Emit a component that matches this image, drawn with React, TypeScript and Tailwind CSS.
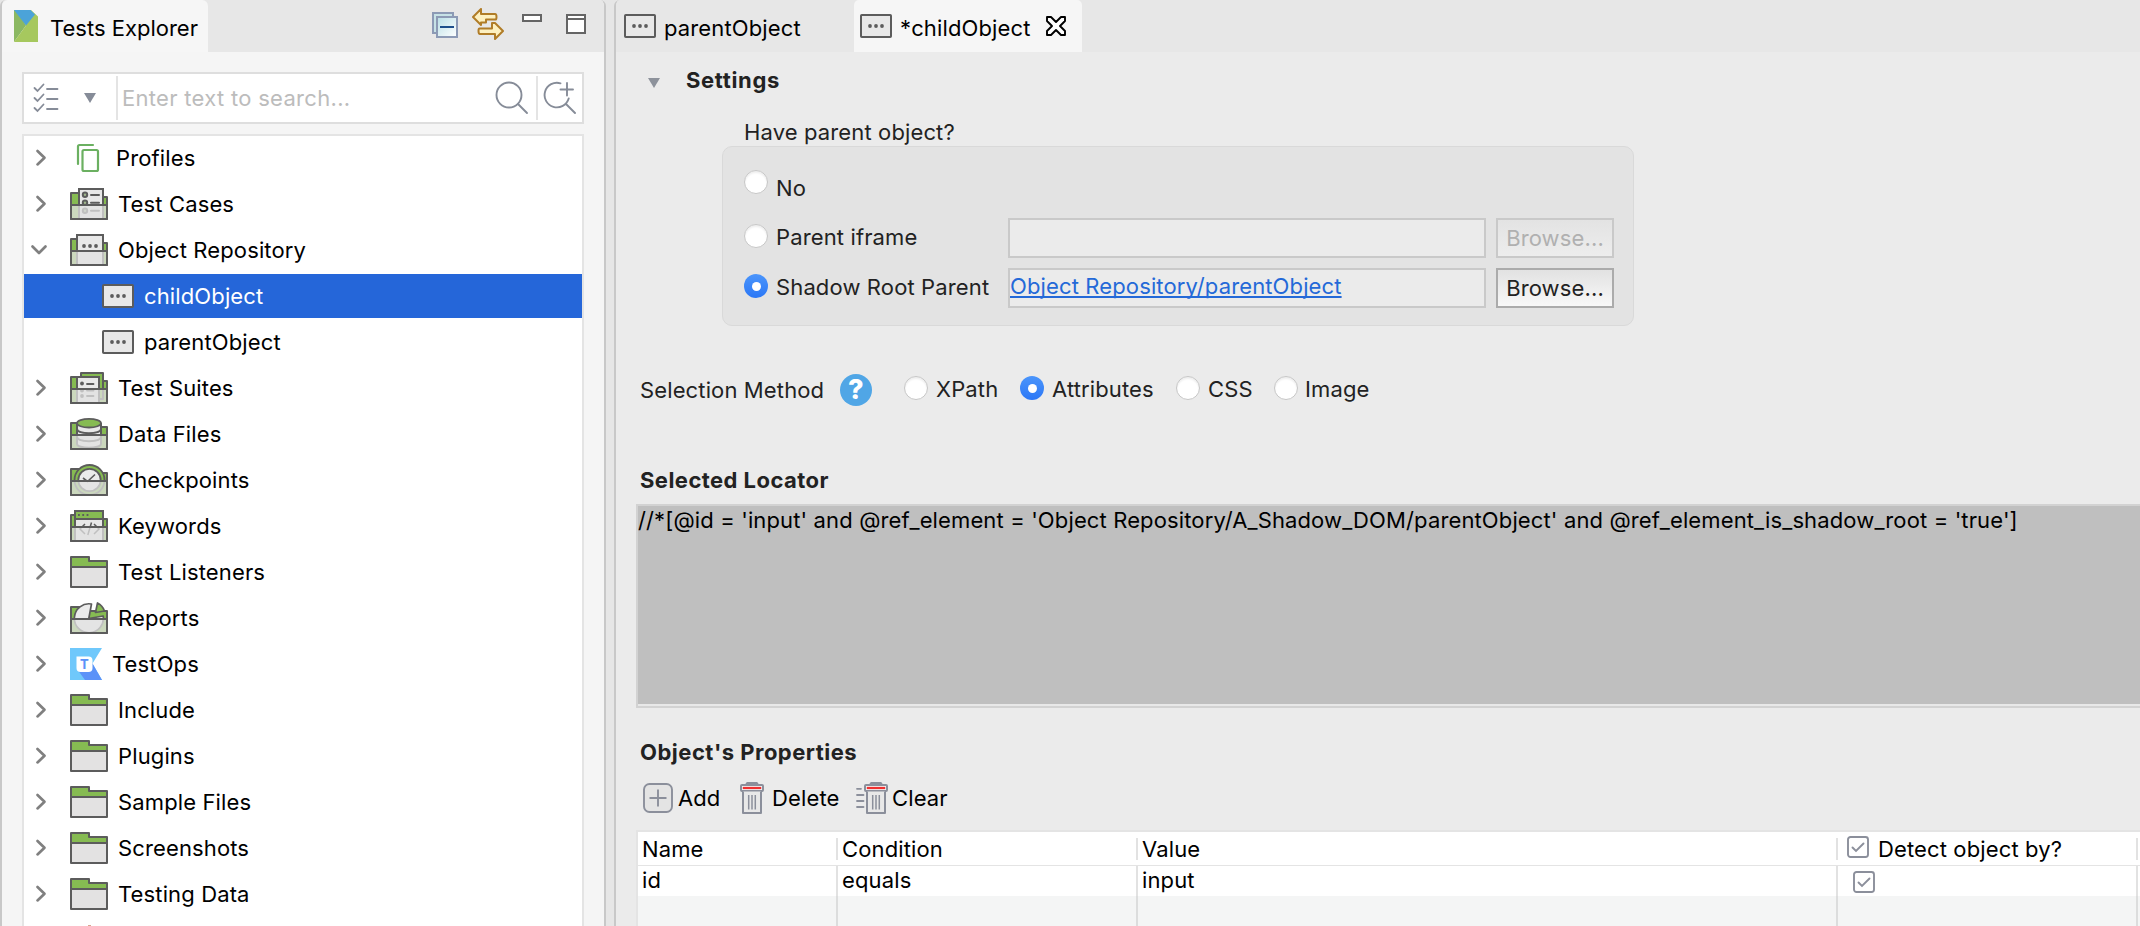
import React from "react";

const STROKE = "#5c5c5c";
const GREEN = "#86bb52";

type IconName =
  | "profiles"
  | "cases"
  | "repo"
  | "suites"
  | "data"
  | "check"
  | "keywords"
  | "folder"
  | "reports"
  | "testops";

function ObjectIcon({ fill = "#e8e8e8" }: { fill?: string }) {
  return (
    <svg width="32" height="24" viewBox="0 0 32 24" className="shrink-0">
      <rect x="1" y="1" width="30" height="22" rx="0.8" fill={fill} stroke={STROKE} strokeWidth="2" />
      <circle cx="10" cy="12" r="1.9" fill={STROKE} />
      <circle cx="16" cy="12" r="1.9" fill={STROKE} />
      <circle cx="22" cy="12" r="1.9" fill={STROKE} />
    </svg>
  );
}

function OpenFolder({ children }: { children: React.ReactNode }) {
  return (
    <svg width="38" height="32" viewBox="0 0 38 32" className="shrink-0">
      <path d="M1 31V5H17V9H37V31Z" fill={GREEN} stroke={STROKE} strokeWidth="2" strokeLinejoin="round" />
      {children}
      <rect x="1" y="17" width="36" height="14" fill="#e2e2e2" fillOpacity="0.75" />
      <path d="M1 17H37V31H1Z" fill="none" stroke={STROKE} strokeWidth="2" strokeLinejoin="round" />
    </svg>
  );
}

function TreeIcon({ name }: { name: IconName }) {
  switch (name) {
    case "profiles":
      return (
        <svg width="38" height="32" viewBox="0 0 38 32" className="shrink-0">
          <g fill="none" stroke="#6bb061" strokeWidth="2.2" strokeLinecap="round" strokeLinejoin="round">
            <path d="M8 22V4.5Q8 3 9.500 3H23" />
            <rect x="12.500" y="8" width="15.500" height="21" rx="1.5" />
          </g>
        </svg>
      );
    case "cases":
      return (
        <OpenFolder>
          <rect x="9" y="1" width="24" height="32" fill="#e8e8e8" stroke={STROKE} strokeWidth="2" />
          <g stroke={STROKE} strokeWidth="2" fill="#9fb58c">
            <circle cx="15" cy="6.800" r="2.200" />
            <circle cx="15" cy="14.800" r="2.200" />
            <circle cx="15" cy="22.800" r="2.200" />
            <path d="M21 7H29M21 14.800H29M21 22.800H29" strokeLinecap="round" />
          </g>
        </OpenFolder>
      );
    case "repo":
      return (
        <OpenFolder>
          <rect x="7" y="1" width="26" height="32" fill="#e8e8e8" stroke={STROKE} strokeWidth="2" />
          <g fill={STROKE}>
            <circle cx="14" cy="12" r="1.900" />
            <circle cx="20" cy="12" r="1.900" />
            <circle cx="26" cy="12" r="1.900" />
          </g>
        </OpenFolder>
      );
    case "suites":
      return (
        <OpenFolder>
          <path d="M11 5V1H33V27H29" fill={GREEN} stroke={STROKE} strokeWidth="2" strokeLinejoin="round" />
          <rect x="7" y="5" width="22" height="28" fill="#e8e8e8" stroke={STROKE} strokeWidth="2" />
          <g fill={STROKE} stroke="none">
            <circle cx="12" cy="11.500" r="1.900" />
            <circle cx="12" cy="18.500" r="1.900" />
            <circle cx="12" cy="24" r="1.900" />
          </g>
          <path d="M17 12H23.500M17 18.500H23.500M17 24H23.500" stroke={STROKE} strokeWidth="1.800" strokeLinecap="round" />
        </OpenFolder>
      );
    case "data":
      return (
        <OpenFolder>
          <path d="M7 5V26C7 31 31 31 31 26V5" fill="#e8e8e8" stroke={STROKE} strokeWidth="2" />
          <path d="M7 11C7 16.500 31 16.500 31 11M7 19C7 24.500 31 24.500 31 19" fill="none" stroke={STROKE} strokeWidth="2" />
          <ellipse cx="19" cy="5.200" rx="12" ry="4.300" fill={GREEN} stroke={STROKE} strokeWidth="1.800" />
        </OpenFolder>
      );
    case "check":
      return (
        <OpenFolder>
          <circle cx="19.500" cy="16" r="15" fill={GREEN} stroke={STROKE} strokeWidth="1.800" />
          <circle cx="19.500" cy="16" r="11.200" fill="#ebebeb" stroke={STROKE} strokeWidth="1.800" />
          <path d="M13 14L17.500 17.500L25 10.500" fill="none" stroke={STROKE} strokeWidth="1.600" />
        </OpenFolder>
      );
    case "keywords":
      return (
        <OpenFolder>
          <rect x="5" y="1" width="28" height="32" fill="#e8e8e8" stroke={STROKE} strokeWidth="2" />
          <path d="M5 1H33V9H5Z" fill={GREEN} stroke={STROKE} strokeWidth="2" strokeLinejoin="round" />
          <path d="M8 5H9.800M12.300 5H14.100M16.600 5H18.400" stroke={STROKE} strokeWidth="1.800" />
          <path d="M15 14L10 19L15 24M24 14L29 19L24 24M21.500 12.500L17.800 25" fill="none" stroke={STROKE} strokeWidth="1.500" />
        </OpenFolder>
      );
    case "reports":
      return (
        <OpenFolder>
          <path d="M21.500 2A14.500 14.500 0 1 0 33.200 14L18.800 16.500Z" fill="#ebebeb" stroke={STROKE} strokeWidth="1.700" strokeLinejoin="round" />
          <path d="M27.500 1L25.500 10.500L34.500 9Q32.500 3.500 27.500 1Z" fill={GREEN} stroke={STROKE} strokeWidth="1.700" strokeLinejoin="round" />
        </OpenFolder>
      );
    case "testops":
      return (
        <svg width="32" height="32" viewBox="0 0 32 32" className="shrink-0">
          <path d="M0 0H32L22.500 15.500L32 32H0Z" fill="#6fc8fb" />
          <path d="M8.500 23L15 32H32L22.500 15.500Z" fill="#5b92f8" />
          <path d="M6.500 8.500H18.500Q22.500 8.500 22.500 12.500V20Q22.500 24 18.500 24H10.500Q6.500 24 6.500 20Z" fill="#ffffff" />
          <text x="14.500" y="20.800" textAnchor="middle" fontFamily="Liberation Mono, monospace" fontWeight="700" fontSize="14.500" fill="#5b92f8">
            T
          </text>
        </svg>
      );
    default:
      return (
        <svg width="38" height="32" viewBox="0 0 38 32" className="shrink-0">
          <path d="M1 31V1H19V5H37V31Z" fill={GREEN} />
          <rect x="1" y="11" width="36" height="20" fill="#e3e2e2" />
          <path d="M1 31V1H19V5H37V31ZM1 11H37" fill="none" stroke={STROKE} strokeWidth="2" strokeLinejoin="round" />
        </svg>
      );
  }
}

type Row = { label: string; icon?: IconName; open?: boolean; child?: boolean; selected?: boolean; gap?: string };

const rows: Row[] = [
  { label: "Profiles", icon: "profiles", gap: "ml-2" },
  { label: "Test Cases", icon: "cases" },
  { label: "Object Repository", icon: "repo", open: true },
  { label: "childObject", child: true, selected: true },
  { label: "parentObject", child: true },
  { label: "Test Suites", icon: "suites" },
  { label: "Data Files", icon: "data" },
  { label: "Checkpoints", icon: "check" },
  { label: "Keywords", icon: "keywords" },
  { label: "Test Listeners", icon: "folder" },
  { label: "Reports", icon: "reports" },
  { label: "TestOps", icon: "testops", gap: "ml-[10px]" },
  { label: "Include", icon: "folder" },
  { label: "Plugins", icon: "folder" },
  { label: "Sample Files", icon: "folder" },
  { label: "Screenshots", icon: "folder" },
  { label: "Testing Data", icon: "folder" },
];

function Chevron({ open }: { open?: boolean }) {
  return (
    <svg width="20" height="20" viewBox="0 0 20 20" className={open ? "ml-[5px] mr-[21px] shrink-0" : "ml-[7px] mr-[19px] shrink-0"}>
      <path
        d={open ? "M3.500 6.500L10 13L16.500 6.500" : "M6.500 3L13.500 9.700L6.500 16.400"}
        fill="none"
        stroke="#808080"
        strokeWidth="2.700"
        strokeLinecap="round"
        strokeLinejoin="round"
      />
    </svg>
  );
}

function TreeRow({ row }: { row: Row }) {
  return (
    <div className={`mb-0.5 flex h-11 shrink-0 items-center ${row.selected ? "bg-[#2566d9] text-white" : ""}`}>
      {row.child ? (
        <span className="ml-[78px] flex">
          <ObjectIcon />
        </span>
      ) : (
        <>
          <Chevron open={row.open} />
          <TreeIcon name={row.icon as IconName} />
        </>
      )}
      <span className={row.gap ?? "ml-[10px]"}>{row.label}</span>
    </div>
  );
}

function Radio({ on, className = "" }: { on?: boolean; className?: string }) {
  return on ? (
    <span className={`flex size-6 shrink-0 items-center justify-center rounded-full bg-linear-to-b from-[#4b95fb] to-[#2b77f6] ${className}`}>
      <span className="size-[9px] rounded-full bg-white" />
    </span>
  ) : (
    <span className={`size-6 shrink-0 rounded-full border border-[#c6c6c6] bg-white shadow-[inset_0_2px_2px_rgba(0,0,0,0.07)] ${className}`} />
  );
}

function Triangle({ className = "", fill = "#868c98" }: { className?: string; fill?: string }) {
  return (
    <svg width="12" height="10" viewBox="0 0 12 10" className={`shrink-0 ${className}`}>
      <path d="M0 0H12L6 10Z" fill={fill} />
    </svg>
  );
}

function Checkbox({ className = "" }: { className?: string }) {
  return (
    <svg width="22" height="22" viewBox="0 0 22 22" className={`shrink-0 ${className}`}>
      <rect x="1" y="1" width="20" height="20" rx="2.500" fill="#fff" stroke="#8b8f9b" strokeWidth="1.900" />
      <path d="M5.500 11.500L9 15L16.500 7.500" fill="none" stroke="#8b8f9b" strokeWidth="1.900" strokeLinecap="round" />
    </svg>
  );
}

function TrashIcon({ lines }: { lines?: boolean }) {
  return (
    <svg width={lines ? 32 : 24} height="32" viewBox={lines ? "-8 0 32 32" : "0 0 24 32"} className="shrink-0">
      {lines && <path d="M-7 6.800H-3M-7 13H-0.500M-7 19H-0.500M-7 25H-0.500" stroke="#8b8f9b" strokeWidth="1.800" strokeLinecap="round" />}
      <path d="M6 2.500L7 0.800H17L18 2.500Z" fill="#8b8f9b" stroke="#8b8f9b" strokeWidth="1.500" strokeLinejoin="round" />
      <rect x="1" y="3" width="22" height="6" rx="1" fill="#f1f1f1" stroke="#8b8f9b" strokeWidth="2" />
      <path d="M2.800 6H21.200" stroke="#f03030" strokeWidth="2.200" />
      <path d="M3 9.500V31H21V9.500" fill="#e8e8e8" stroke="#8b8f9b" strokeWidth="2" strokeLinejoin="round" />
      <path d="M8.700 13V27.500M12 13V27.500M15.300 13V27.500" stroke="#8b8f9b" strokeWidth="1.500" />
    </svg>
  );
}

function Explorer() {
  return (
    <aside className="flex h-full w-[606px] shrink-0 flex-col overflow-hidden rounded-t-[6px] border-x-2 border-[#c8c8c8] bg-[#f5f5f5]">
      <div className="flex h-[52px] shrink-0 items-start bg-[#e7e7e7]">
        <div className="flex h-full w-[206px] shrink-0 items-start rounded-t-[6px] bg-[#f6f6f6] pl-3">
          <svg width="24" height="32" viewBox="0 0 24 32" className="mt-[10px] shrink-0">
            <path d="M0 0H4L12 15.500L0 32Z" fill="#8bb862" />
            <path d="M2 0H17L24 6.500V32H0L12 15.500Z" fill="#a6c85e" />
            <path d="M0 0H16.500L21 4.500L12 15.500Z" fill="#4ba3d9" />
          </svg>
          <span className="ml-3 mt-[14px] tracking-normal">Tests Explorer</span>
        </div>
        <svg width="26" height="26" viewBox="0 0 26 26" className="ml-[224px] mt-3 shrink-0">
          <defs>
            <linearGradient id="sheet" x1="0" y1="0" x2="1" y2="1">
              <stop offset="0" stopColor="#b9dfe6" />
              <stop offset="1" stopColor="#ffffff" />
            </linearGradient>
          </defs>
          <rect x="1" y="1" width="20" height="20" fill="#c7e2e6" stroke="#8c9ab5" strokeWidth="2" />
          <rect x="5" y="5" width="20" height="20" fill="url(#sheet)" stroke="#8c9ab5" strokeWidth="2" />
          <path d="M8 15H22" stroke="#1d4f8b" strokeWidth="2" />
        </svg>
        <svg width="32" height="32" viewBox="0 0 32 32" className="ml-[14px] mt-2 shrink-0">
          <g fill="#fdf0c0" stroke="#b07c27" strokeWidth="2" strokeLinejoin="round">
            <path d="M1 9L9 1V6H23Q24.500 6 24.500 9T23 11.500H14V14.500H9V17Z" />
            <path d="M31 23L23 31V26H8Q6.500 26 6.500 23T8 20.500H20V15H23Z" />
          </g>
        </svg>
        <svg width="20" height="8" viewBox="0 0 20 8" className="ml-[18px] mt-[14px] shrink-0">
          <rect x="1" y="1" width="18" height="6" fill="#fff" stroke="#656565" strokeWidth="2" />
        </svg>
        <svg width="20" height="20" viewBox="0 0 20 20" className="ml-6 mt-[14px] shrink-0">
          <path d="M1 1H19V19H1ZM1 5H19" fill="#fff" stroke="#656565" strokeWidth="2" />
        </svg>
      </div>

      <div className="mx-5 mt-5 flex h-[52px] shrink-0 items-center border-2 border-[#dedede] bg-white">
        <svg width="26" height="30" viewBox="0 0 26 30" className="ml-[9px]">
          <g fill="none" stroke="#868c98" strokeWidth="1.800" strokeLinecap="round">
            <path d="M1.500 5L4.500 8L10.500 1.500M1.500 15L4.500 18L10.500 11.500M1.500 25L4.500 28L10.500 21.500" />
            <path d="M14 6H24.500M14 16H24.500M14 26H24.500" />
          </g>
        </svg>
        <Triangle className="ml-[25px]" />
        <span className="ml-5 h-11 w-0.5 bg-[#e4e4e4]" />
        <span className="ml-1 w-[373px] tracking-[0.3px] text-[#bcbcbc]">Enter text to search...</span>
        <svg width="34" height="34" viewBox="0 0 34 34" className="shrink-0">
          <g fill="none" stroke="#868c98" strokeWidth="1.900" strokeLinecap="round">
            <circle cx="14" cy="14" r="12.500" />
            <path d="M23 23L32 32" />
          </g>
        </svg>
        <span className="ml-[7px] h-11 w-0.5 shrink-0 bg-[#e4e4e4]" />
        <svg width="34" height="34" viewBox="0 0 34 34" className="ml-[5px] shrink-0">
          <g fill="none" stroke="#868c98" strokeWidth="1.900" strokeLinecap="round">
            <path d="M17.500 2.300A12.300 12.300 0 1 0 25.700 17.500M23 23L32 32M17.500 8.500H30M24 2V14.500" />
          </g>
        </svg>
      </div>

      <div className="mx-5 mt-[10px] flex min-h-0 flex-1 flex-col overflow-hidden border-2 border-b-0 border-[#e4e4e4] bg-white">
        {rows.map((r) => (
          <TreeRow key={r.label} row={r} />
        ))}
        <div className="flex h-11 shrink-0 items-start pl-[64px] pt-[7px]">
          <span className="h-2 w-[3px] bg-[#d9a58f]" />
        </div>
      </div>
    </aside>
  );
}

function BrowseButton({ disabled }: { disabled?: boolean }) {
  return (
    <button
      className={
        disabled
          ? "ml-[10px] flex h-10 w-[118px] items-start justify-center border-2 border-[#c9c9c9] bg-linear-to-b from-[#e3e3e3] to-[#ededed] pt-1 text-[#b0b0b0]"
          : "ml-[10px] flex h-10 w-[118px] items-start justify-center border-2 border-[#ababab] bg-linear-to-b from-[#e2e2e2] to-[#f8f8f8] pt-1 text-[#222]"
      }
    >
      Browse...
    </button>
  );
}

function Editor() {
  return (
    <main className="ml-2 flex h-full min-w-0 flex-1 flex-col overflow-hidden rounded-tl-[6px] border-l-2 border-[#c8c8c8] bg-[#ebebeb] text-[#222]">
      <div className="flex h-[52px] shrink-0 bg-[#e7e7e7] text-black">
        <div className="flex w-[238px] items-start pl-2 pt-[14px]">
          <ObjectIcon />
          <span className="ml-2">parentObject</span>
        </div>
        <div className="flex w-[228px] items-start rounded-t-[5px] bg-[#f6f6f6] pl-1.5 pt-[14px]">
          <ObjectIcon />
          <span className="ml-2 w-[146px]">*childObject</span>
          <svg width="20" height="20" viewBox="0 0 20 20" className="mt-0.5">
            <path
              d="M1 1H5L10 6L15 1H19V5L14 10L19 15V19H15L10 14L5 19H1V15L6 10L1 5Z"
              fill="#fff"
              stroke="#000"
              strokeWidth="1.900"
              strokeLinejoin="round"
            />
          </svg>
        </div>
      </div>

      <div className="mt-[14px] flex h-7 shrink-0 pl-8">
        <Triangle className="mt-3" fill="#8d929b" />
        <h2 className="ml-[26px] font-bold tracking-[0.65px]">Settings</h2>
      </div>

      <div className="mt-6 shrink-0 pl-32">Have parent object?</div>
      <section className="ml-[106px] flex h-[180px] w-[912px] shrink-0 flex-col rounded-[10px] border border-[#d9d9d9] bg-[#e3e3e3] pl-[21px] pt-[23px]">
        <div className="flex h-12">
          <Radio />
          <span className="ml-2 mt-1">No</span>
        </div>
        <div className="flex h-10">
          <Radio className="mt-1.5" />
          <span className="ml-2 mt-[5px] w-[232px]">Parent iframe</span>
          <div className="h-10 w-[478px] border-2 border-[#c9c9c9] bg-[#ebebeb]" />
          <BrowseButton disabled />
        </div>
        <div className="mt-[10px] flex h-10">
          <Radio on className="mt-1.5" />
          <span className="ml-2 mt-[5px] w-[232px]">Shadow Root Parent</span>
          <div className="h-10 w-[478px] border-2 border-[#c9c9c9] bg-[#ebebeb] pt-0.5">
            <a className="block text-[#2469d8] underline decoration-2 underline-offset-[2px] [text-decoration-skip-ink:none]">
              Object Repository/parentObject
            </a>
          </div>
          <BrowseButton />
        </div>
      </section>

      <div className="mt-12 flex h-8 shrink-0 pl-6">
        <span className="mt-0.5 w-[200px]">Selection Method</span>
        <span className="flex size-8 items-center justify-center rounded-full bg-[#50a6e6] text-[27px] font-extrabold text-white">?</span>
        <Radio className="ml-8 mt-0.5" />
        <span className="ml-2 mt-px w-[84px]">XPath</span>
        <Radio on className="mt-0.5" />
        <span className="ml-2 mt-px w-[124px]">Attributes</span>
        <Radio className="mt-0.5" />
        <span className="ml-2 mt-px w-[66px]">CSS</span>
        <Radio className="mt-0.5" />
        <span className="ml-[7px] mt-px">Image</span>
      </div>

      <h3 className="mt-[60px] shrink-0 pl-6 font-bold tracking-[0.45px]">Selected Locator</h3>
      <div className="ml-5 mt-[10px] h-[204px] shrink-0 border-2 border-r-0 border-[#d2d2d2] bg-[#e8e8e8]">
        <div className="h-[198px] bg-[#bfbfbf] whitespace-nowrap text-black">
          {"//*[@id = 'input' and @ref_element = 'Object Repository/A_Shadow_DOM/parentObject' and @ref_element_is_shadow_root = 'true']"}
        </div>
      </div>

      <h3 className="mt-[30px] shrink-0 pl-6 font-bold tracking-[0.5px]">Object&apos;s Properties</h3>
      <div className="mt-4 flex h-8 shrink-0 pl-[27px] text-black">
        <svg width="30" height="32" viewBox="0 0 30 32" className="shrink-0">
          <rect x="1" y="2" width="28" height="28" rx="5.500" fill="#e4e4e4" stroke="#8b8f9b" strokeWidth="1.900" />
          <path d="M6.500 16H23.500M15 7.500V24.500" stroke="#8b8f9b" strokeWidth="1.900" />
        </svg>
        <span className="ml-[5px] mt-0.5 w-[62px] tracking-normal">Add</span>
        <TrashIcon />
        <span className="ml-2 mt-0.5 w-[84px]">Delete</span>
        <TrashIcon lines />
        <span className="ml-[4px] mt-0.5">Clear</span>
      </div>

      <div className="ml-5 mt-4 flex min-h-0 flex-1 flex-col border-l-2 border-t-2 border-[#e4e4e4] bg-white text-black">
        <div className="flex h-[34px] shrink-0 border-b border-[#e4e4e4] pt-[6px] pb-[5px]">
          <div className="flex w-[200px] items-center border-r-2 border-[#e2e2e2] pl-1">Name</div>
          <div className="flex w-[300px] items-center border-r-2 border-[#e2e2e2] pl-1">Condition</div>
          <div className="flex w-[700px] items-center border-r-2 border-[#e2e2e2] pl-1">Value</div>
          <div className="flex w-[300px] items-center border-r-2 border-[#e2e2e2] pl-[9px]">
            <Checkbox className="-mt-[5px]" />
            <span className="ml-[9px]">Detect object by?</span>
          </div>
        </div>
        <div className="flex h-[30px] shrink-0">
          <div className="w-[200px] border-r-2 border-[#e2e2e2] pl-1">id</div>
          <div className="w-[300px] border-r-2 border-[#e2e2e2] pl-1">equals</div>
          <div className="w-[700px] border-r-2 border-[#e2e2e2] pl-1">input</div>
          <div className="w-[300px] border-r-2 border-[#e2e2e2] pl-[15px] pt-[5px]">
            <Checkbox />
          </div>
        </div>
        <div className="flex flex-1 bg-[#f4f5f5]">
          <div className="w-[200px] border-r-2 border-[#dcdddd]" />
          <div className="w-[300px] border-r-2 border-[#dcdddd]" />
          <div className="w-[700px] border-r-2 border-[#dcdddd]" />
          <div className="w-[300px] border-r-2 border-[#dcdddd]" />
        </div>
      </div>
    </main>
  );
}

export default function App() {
  return (
    <div className="flex h-[926px] w-[2140px] overflow-hidden bg-[#e6e6e6] font-[Inter,'Noto_Sans',sans-serif] text-[22px] leading-7 tracking-[0.13px] whitespace-nowrap text-black">
      <Explorer />
      <Editor />
    </div>
  );
}
